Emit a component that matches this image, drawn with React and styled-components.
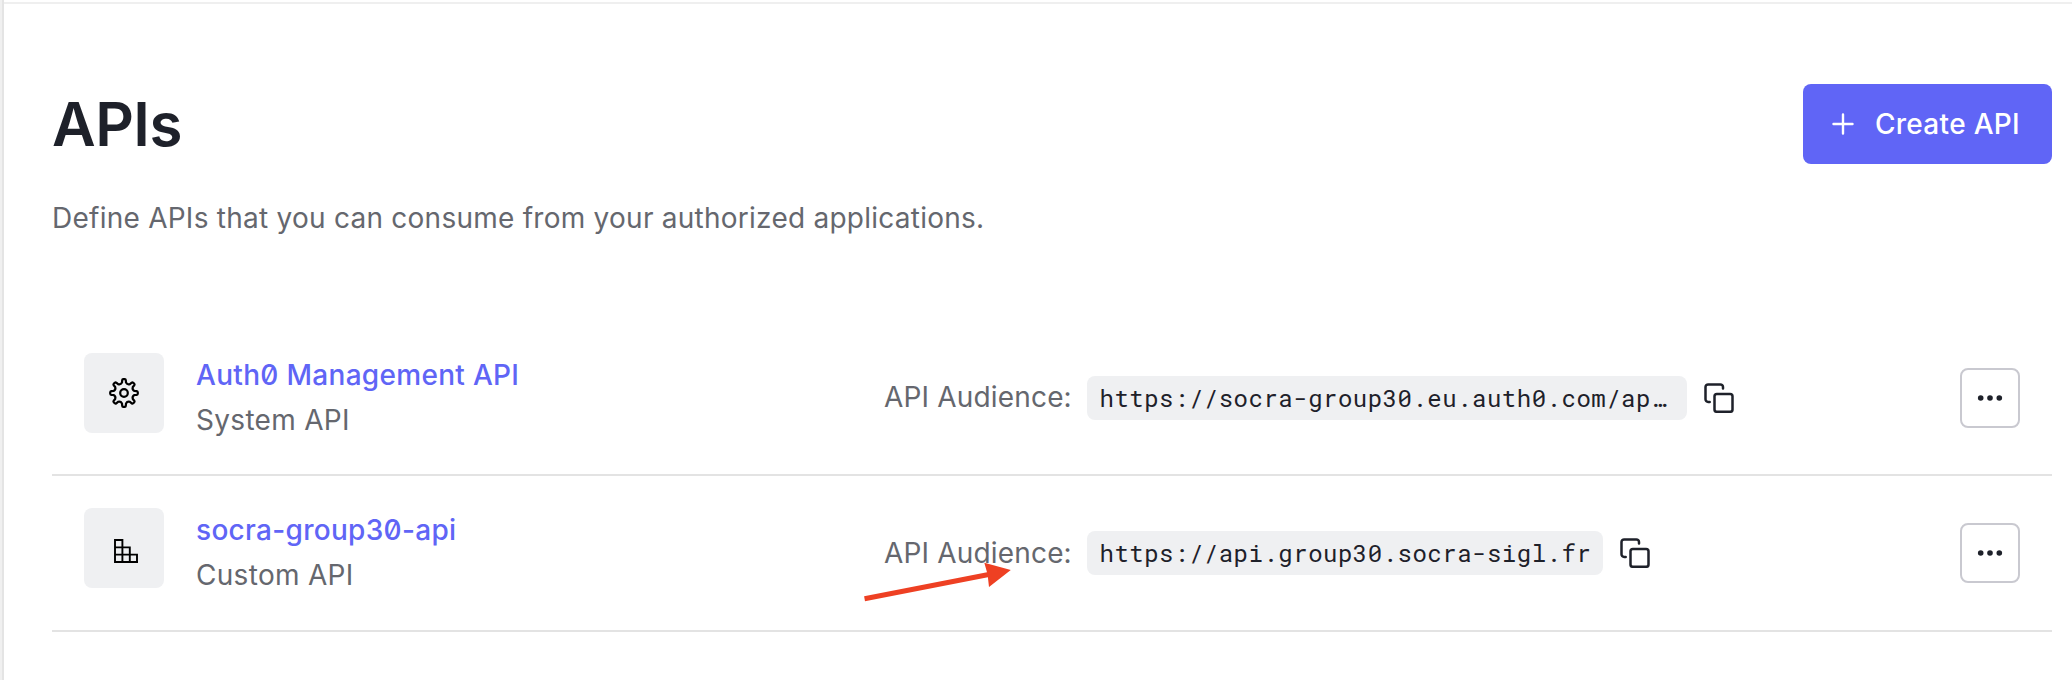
import React from 'react';
import styled, { createGlobalStyle } from 'styled-components';

const GlobalStyle = createGlobalStyle`
  *, *::before, *::after { box-sizing: border-box; }
  body {
    margin: 0;
    background: #fff;
    color: #1e212a;
    font-family: Inter, "Liberation Sans", sans-serif;
    font-size: 28px;
    line-height: 1.6;
    letter-spacing: 0.3px;
    font-feature-settings: "zero" 1;
  }
`;

const Shell = styled.div`
  display: flex;
  height: 680px;
  overflow: hidden;
`;

const SidebarEdge = styled.div`
  flex: none;
  width: 4px;
  background: #f0f0f0;
  border-right: 2px solid #e4e4e4;
`;

const Page = styled.main`
  position: relative;
  flex: 1;
  min-width: 0;
  padding: 0 20px 0 48px;
`;

const TopRule = styled.hr`
  height: 2px;
  margin: 2px -20px 0 -48px;
  border: 0;
  background: #efefef;
`;

const Header = styled.header`
  display: flex;
  align-items: center;
  justify-content: space-between;
  margin-top: 80px;
  height: 80px;
`;

const Title = styled.h1`
  margin: 0;
  font-size: 60px;
  font-weight: 600;
  line-height: 80px;
  letter-spacing: -0.5px;
`;

const CreateButton = styled.button`
  display: flex;
  align-items: center;
  gap: 16px;
  height: 80px;
  padding: 0 32px 0 24px;
  border: 0;
  border-radius: 8px;
  background: #6065f6;
  color: #fff;
  font: inherit;
  font-weight: 500;
  letter-spacing: inherit;
`;

const Subtitle = styled.p`
  margin: 32px 0 0;
  color: #65676e;
  letter-spacing: 0.25px;
`;

const ApiList = styled.ul`
  margin: 80px 0 0;
  padding: 0;
  list-style: none;
`;

const ApiRow = styled.li`
  display: grid;
  grid-template-columns: 800px 1fr auto;
  align-items: center;
  padding: 32px;
  border-bottom: 2px solid #e3e3e3;
`;

const Identity = styled.div`
  display: flex;
  gap: 32px;
`;

const IconTile = styled.div`
  display: flex;
  align-items: center;
  justify-content: center;
  width: 80px;
  height: 80px;
  padding-top: 1px;
  border-radius: 8px;
  background: #eff0f2;
  color: #000;
`;

const Names = styled.div`
  display: flex;
  flex-direction: column;
`;

const ApiName = styled.a`
  color: #6065f6;
  font-weight: 500;
`;

const ApiType = styled.span`
  color: #65676e;
`;

const Audience = styled.div`
  display: flex;
  align-items: center;
`;

const AudienceLabel = styled.span`
  width: 203px;
  color: #65676e;
  letter-spacing: 0.17px;
`;

const AudienceCode = styled.code`
  max-width: 600px;
  height: 44px;
  padding: 0 11.5px 0 12.5px;
  overflow: hidden;
  border-radius: 8px;
  background: #eff0f2;
  font-family: "Roboto Mono", "DejaVu Sans Mono", monospace;
  font-size: 24px;
  line-height: 44px;
  letter-spacing: 0.5px;
  text-overflow: ellipsis;
  white-space: nowrap;
`;

const CopyButton = styled.button`
  display: flex;
  margin-left: 17px;
  padding: 0;
  border: 0;
  background: none;
  color: #1e212a;
`;

const MenuButton = styled.button`
  display: flex;
  align-items: center;
  justify-content: center;
  width: 60px;
  height: 60px;
  padding: 0;
  border: 2px solid #c9c9d0;
  border-radius: 8px;
  background: #fff;
  color: #1e212a;
`;

const Pointer = styled.svg`
  position: absolute;
  left: 856px;
  top: 560px;
`;

function PlusIcon() {
  return (
    <svg width="32" height="32" viewBox="0 0 32 32" fill="none" stroke="currentColor" strokeWidth="2.4" strokeLinecap="round">
      <path d="M16 6.5v19M6.5 16h19" />
    </svg>
  );
}

const point = (radius, degrees) => {
  const a = (degrees * Math.PI) / 180;
  return `${(15 + radius * Math.sin(a)).toFixed(2)} ${(15 - radius * Math.cos(a)).toFixed(2)}`;
};

const gearOutline =
  Array.from({ length: 8 }, (_, i) => {
    const t = i * 45;
    return [
      `${i ? 'L' : 'M'}${point(10.6, t - 11)}`,
      `L${point(12.9, t - 8)}`,
      `Q${point(13.8, t - 7)} ${point(13.8, t - 3)}`,
      `L${point(13.8, t + 3)}`,
      `Q${point(13.8, t + 7)} ${point(12.9, t + 8)}`,
      `L${point(10.6, t + 11)}`,
      `Q${point(8.6, t + 22.5)} ${point(10.6, t + 34)}`,
    ].join('');
  }).join('') + 'Z';

function GearIcon() {
  return (
    <svg width="30" height="30" viewBox="0 0 30 30" fill="none" stroke="currentColor" strokeWidth="2.2" strokeLinejoin="round">
      <path d={gearOutline} />
      <circle cx="15" cy="15" r="3.8" />
    </svg>
  );
}

function BlocksIcon() {
  return (
    <svg width="30" height="30" viewBox="0 0 30 30" fill="none" stroke="currentColor" strokeWidth="1.9">
      <path d="M6 6h7.4v22M6 13.4h14.8V28M6 20.6h22V28M6 5v23h23" />
    </svg>
  );
}

function CopyIcon() {
  return (
    <svg width="30" height="30" viewBox="0 0 30 30" fill="none" stroke="currentColor" strokeWidth="2.5" strokeLinecap="round">
      <rect x="10.5" y="10.9" width="18" height="17.9" rx="2.4" />
      <path d="M5.7 18.9H4.1a2.6 2.6 0 0 1-2.6-2.6V4a2.6 2.6 0 0 1 2.6-2.6h12.3A2.6 2.6 0 0 1 19 4v1.4" />
    </svg>
  );
}

function DotsIcon() {
  return (
    <svg width="26" height="8" viewBox="0 0 26 8" fill="currentColor">
      <circle cx="3.7" cy="4" r="2.8" />
      <circle cx="13" cy="4" r="2.8" />
      <circle cx="22.3" cy="4" r="2.8" />
    </svg>
  );
}

const apis = [
  {
    name: 'Auth0 Management API',
    type: 'System API',
    audience: 'https://socra-group30.eu.auth0.com/api/v2/',
    Icon: GearIcon,
  },
  {
    name: 'socra-group30-api',
    type: 'Custom API',
    audience: 'https://api.group30.socra-sigl.fr',
    Icon: BlocksIcon,
  },
];

export default function App() {
  return (
    <>
      <GlobalStyle />
      <Shell>
        <SidebarEdge />
        <Page>
          <TopRule />
          <Header>
            <Title>APIs</Title>
            <CreateButton type="button">
              <PlusIcon />
              Create API
            </CreateButton>
          </Header>
          <Subtitle>Define APIs that you can consume from your authorized applications.</Subtitle>
          <ApiList>
            {apis.map(({ name, type, audience, Icon }) => (
              <ApiRow key={name}>
                <Identity>
                  <IconTile>
                    <Icon />
                  </IconTile>
                  <Names>
                    <ApiName>{name}</ApiName>
                    <ApiType>{type}</ApiType>
                  </Names>
                </Identity>
                <Audience>
                  <AudienceLabel>API Audience:</AudienceLabel>
                  <AudienceCode>{audience}</AudienceCode>
                  <CopyButton type="button" aria-label="Copy">
                    <CopyIcon />
                  </CopyButton>
                </Audience>
                <MenuButton type="button" aria-label="More options">
                  <DotsIcon />
                </MenuButton>
              </ApiRow>
            ))}
          </ApiList>
          <Pointer width="160" height="48" viewBox="0 0 160 48" fill="#ee4023" aria-hidden="true">
            <path d="M4.1 36.2 127 12.2 124.3 2.7 150.8 10.1 129 27.1 127.9 17.3 5 41.2Z" />
          </Pointer>
        </Page>
      </Shell>
    </>
  );
}
